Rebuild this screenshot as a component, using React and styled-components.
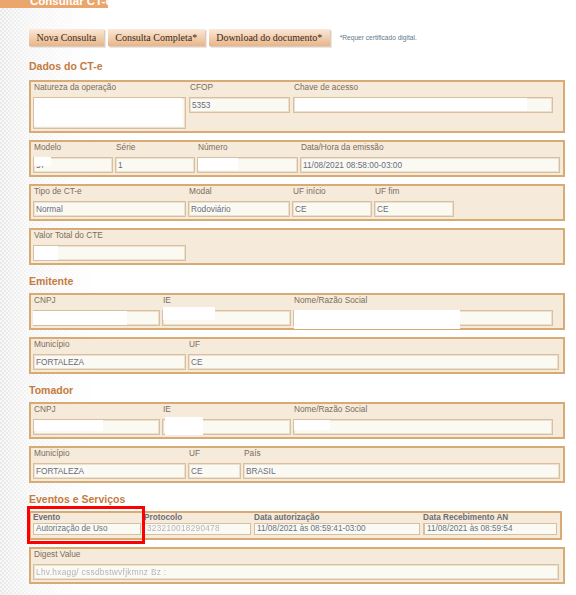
import React from "react";
import styled, { createGlobalStyle } from "styled-components";

const GlobalStyle = createGlobalStyle`
  html, body {
    margin: 0;
    padding: 0;
  }
  body {
    width: 576px;
    min-height: 595px;
    overflow: hidden;
    font-family: "Liberation Sans", Arial, sans-serif;
    background:
      linear-gradient(to right, rgba(255, 255, 255, 0) 0px, rgba(255, 255, 255, 0.5) 28px, #fff 95px),
      repeating-conic-gradient(#e9e9e9 0 25%, #f7f7f7 0 50%) 0 0 / 4px 4px;
  }
`;

const Page = styled.div`
  width: 576px;
  height: 595px;
  overflow: hidden;
`;

const Tab = styled.div`
  width: 108px;
  height: 8px;
  overflow: hidden;
  background: #eaa66c;
  padding-left: 30px;
  box-sizing: border-box;
  span {
    display: block;
    margin-top: -6px;
    line-height: 14px;
    font-size: 11.5px;
    font-weight: bold;
    color: #fff;
    white-space: nowrap;
  }
`;

const Content = styled.div`
  padding-left: 29px;
  width: 536px;
`;

const Toolbar = styled.div`
  display: flex;
  align-items: center;
  gap: 4px;
  margin-top: 21px;
  height: 17px;
`;

const Button = styled.button`
  height: 17px;
  padding: 0 7.5px;
  border: none;
  font-family: "Liberation Serif", "Times New Roman", serif;
  font-size: 10px;
  color: #3b2a1a;
  background: linear-gradient(#fae9d8, #e8b589);
  box-shadow: 1px 1px 0 #d9cbbd, 2px 2px 0 #efe7df;
  cursor: pointer;
`;

const Note = styled.span`
  margin-left: 6px;
  font-size: 6.6px;
  color: #62798a;
`;

const Heading = styled.h2`
  margin: ${(p) => (p.$first ? "13px 0 7px" : "9px 0 5px")};
  line-height: 14px;
  font-size: 10.5px;
  font-weight: bold;
  color: #c47b40;
`;

const Box = styled.div`
  box-sizing: border-box;
  width: ${(p) => p.$width || 536}px;
  margin-bottom: ${(p) => (p.$last ? 0 : 7)}px;
  border: 2px solid #d9ab74;
  background: #f6ebda;
  padding: 0 2px 2px;
  position: relative;
`;

const Row = styled.div`
  display: flex;
  gap: ${(p) => p.$gap || 2}px;
`;

const Field = styled.div`
  width: ${(p) => p.$w}px;
  flex: none;
`;

const Label = styled.div`
  line-height: 11px;
  margin-bottom: 4px;
  padding-left: 1px;
  font-size: 8.3px;
  color: #7b6c5e;
  white-space: nowrap;
`;

const Input = styled.div`
  position: relative;
  box-sizing: border-box;
  height: ${(p) => p.$h || 16}px;
  border: 1px solid #d7bf9f;
  box-shadow: inset 0 0 0 1px #ece0cf;
  background: #fafaf3;
  padding: 1px 2px;
  font-size: 8.3px;
  line-height: 12px;
  color: #6b6b7e;
  white-space: nowrap;
`;

const Redact = styled.span`
  position: absolute;
  left: ${(p) => p.$l}px;
  top: ${(p) => p.$t ?? 1}px;
  width: ${(p) => p.$w}px;
  height: ${(p) => p.$h}px;
  background: #fff;
`;

const EventTable = styled.div`
  display: grid;
  grid-template-columns: 108px 107px 166px 134px;
  column-gap: 3px;
  padding-bottom: 1px;
`;

const EventHead = styled.div`
  line-height: 10px;
  font-size: 8.2px;
  font-weight: bold;
  color: #6d6d78;
  white-space: nowrap;
`;

const EventCell = styled.div`
  box-sizing: border-box;
  height: 12px;
  border: 1px solid #d5c0a4;
  border-left-width: ${(p) => (p.$strong ? 2 : 1)}px;
  background: #fafaf3;
  padding-left: 2px;
  font-size: 8.2px;
  line-height: 10px;
  color: #6a7082;
  white-space: nowrap;
  overflow: hidden;
`;

const Blurred = styled.span`
  color: #b4b4be;
  filter: blur(0.7px);
  letter-spacing: 0.3px;
`;

const Marker = styled.div`
  position: absolute;
  left: -4px;
  top: -7px;
  width: 118px;
  height: 38px;
  box-sizing: border-box;
  border: 3px solid #f00;
  pointer-events: none;
`;

function F({ label, w, h, children }) {
  return (
    <Field $w={w}>
      <Label>{label}</Label>
      <Input $h={h}>{children}</Input>
    </Field>
  );
}

export default function App() {
  return (
    <Page>
      <GlobalStyle />
      <Tab>
        <span>Consultar CT-e</span>
      </Tab>
      <Content>
        <Toolbar>
          <Button>Nova Consulta</Button>
          <Button>Consulta Completa*</Button>
          <Button>Download do documento*</Button>
          <Note>*Requer certificado digital.</Note>
        </Toolbar>

        <Heading $first>Dados do CT-e</Heading>
        <Box>
          <Row $gap={3}>
            <F label="Natureza da operação" w={153} h={32}>
              <Redact $l={0} $t={0} $w={148} $h={28} />
            </F>
            <F label="CFOP" w={101}>5353</F>
            <F label="Chave de acesso" w={260}>
              <Redact $l={1} $t={0} $w={232} $h={13} />
            </F>
          </Row>
        </Box>
        <Box>
          <Row>
            <F label="Modelo" w={80}>
              57
              <Redact $l={0} $t={-1} $w={17} $h={9} />
            </F>
            <F label="Série" w={80}>1</F>
            <F label="Número" w={101}>
              <Redact $l={0} $t={0} $w={40} $h={12} />
            </F>
            <F label="Data/Hora da emissão" w={260}>11/08/2021 08:58:00-03:00</F>
          </Row>
        </Box>
        <Box>
          <Row>
            <F label="Tipo de CT-e" w={153}>Normal</F>
            <F label="Modal" w={102}>Rodoviário</F>
            <F label="UF início" w={80}>CE</F>
            <F label="UF fim" w={80}>CE</F>
          </Row>
        </Box>
        <Box>
          <Row>
            <F label="Valor Total do CTE" w={153}>
              <Redact $l={0} $t={0} $w={24} $h={14} />
            </F>
          </Row>
        </Box>

        <Heading>Emitente</Heading>
        <Box>
          <Row>
            <F label="CNPJ" w={127}>
              <Redact $l={-1} $t={0} $w={94} $h={14} />
            </F>
            <F label="IE" w={129}>
              <Redact $l={0} $t={-4} $w={52} $h={13} />
            </F>
            <F label="Nome/Razão Social" w={260}>
              <Redact $l={0} $t={-1} $w={166} $h={19} />
            </F>
          </Row>
        </Box>
        <Box>
          <Row>
            <F label="Município" w={153}>FORTALEZA</F>
            <F label="UF" w={371}>CE</F>
          </Row>
        </Box>

        <Heading>Tomador</Heading>
        <Box>
          <Row>
            <F label="CNPJ" w={127}>
              <Redact $l={0} $t={0} $w={69} $h={11} />
            </F>
            <F label="IE" w={129}>
              <Redact $l={2} $t={-3} $w={38} $h={18} />
            </F>
            <F label="Nome/Razão Social" w={260}>
              <Redact $l={0} $t={0} $w={36} $h={10} />
            </F>
          </Row>
        </Box>
        <Box>
          <Row>
            <F label="Município" w={153}>FORTALEZA</F>
            <F label="UF" w={53}>CE</F>
            <F label="País" w={317}>BRASIL</F>
          </Row>
        </Box>

        <Heading>Eventos e Serviços</Heading>
        <Box $width={533}>
          <EventTable>
            <EventHead>Evento</EventHead>
            <EventHead>Protocolo</EventHead>
            <EventHead>Data autorização</EventHead>
            <EventHead>Data Recebimento AN</EventHead>
            <EventCell>Autorização de Uso</EventCell>
            <EventCell>
              <Blurred>323210018290478</Blurred>
            </EventCell>
            <EventCell>11/08/2021 às 08:59:41-03:00</EventCell>
            <EventCell $strong>11/08/2021 às 08:59:54</EventCell>
          </EventTable>
          <Marker />
        </Box>
        <Box $last>
          <Row>
            <Field $w={526}>
              <Label>Digest Value</Label>
              <Input>
                <Blurred>Lhv.hxagg/ cssdbstwvfjkmnz Bz :</Blurred>
              </Input>
            </Field>
          </Row>
        </Box>
      </Content>
    </Page>
  );
}
